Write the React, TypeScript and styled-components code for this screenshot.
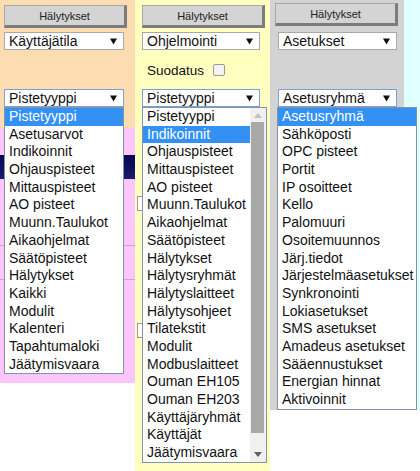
import * as React from 'react';
import styled, { createGlobalStyle } from 'styled-components';

const GlobalStyle = createGlobalStyle`
  html, body {
    margin: 0;
    padding: 0;
    background: #ffffff;
  }
  body {
    font-family: "Liberation Sans", Arial, sans-serif;
    color: #111;
  }
`;

const ROW = 17.7;

const Page = styled.div`
  display: flex;
  align-items: flex-start;
  width: 420px;
  height: 471px;
  overflow: hidden;
`;

const Column = styled.div<{ $bg: string; $w?: number; $h: number }>`
  position: relative;
  display: flex;
  flex-direction: column;
  width: ${p => (p.$w ? `${p.$w}px` : 'auto')};
  flex: ${p => (p.$w ? '0 0 auto' : '1 1 auto')};
  height: ${p => p.$h}px;
  background: ${p => p.$bg};
`;

const Controls = styled.div<{ $pad: string }>`
  display: flex;
  flex-direction: column;
  align-items: flex-start;
  padding: ${p => p.$pad};
`;

const AlarmButton = styled.div`
  box-sizing: border-box;
  width: 123px;
  height: 23px;
  display: flex;
  align-items: center;
  justify-content: center;
  background: #d4d4d4;
  border: 1px solid #a8a8a8;
  border-right: 3px solid #7c7c7c;
  border-bottom: 3px solid #7c7c7c;
  font-size: 11px;
  color: #222;
`;

const SelectWrap = styled.div<{ $top: number; $left?: number }>`
  position: relative;
  margin-top: ${p => p.$top}px;
  margin-left: ${p => p.$left ?? 0}px;
`;

const SelectBox = styled.div<{ $w: number; $focus?: boolean }>`
  box-sizing: border-box;
  width: ${p => p.$w}px;
  height: 18px;
  display: flex;
  align-items: center;
  justify-content: space-between;
  padding: 0 6px 0 4px;
  background: #fff;
  border: 1px solid ${p => (p.$focus ? '#7f9fd6' : '#a9a9a9')};
  font-size: 14px;
  line-height: 16px;
  color: #111;
`;

const DropList = styled.div<{ $w: number; $left: number }>`
  position: absolute;
  z-index: 10;
  top: 100%;
  left: ${p => p.$left}px;
  width: ${p => p.$w}px;
  box-sizing: border-box;
  display: flex;
  background: #fff;
  border: 1px solid #8593a6;
`;

const Options = styled.div`
  flex: 1 1 auto;
  display: flex;
  flex-direction: column;
`;

const Option = styled.div<{ $active?: boolean }>`
  height: ${ROW}px;
  line-height: ${ROW}px;
  padding-left: 4px;
  white-space: nowrap;
  font-size: 14px;
  color: ${p => (p.$active ? '#fff' : '#111')};
  background: ${p => (p.$active ? '#3391f4' : 'transparent')};
`;

const Scrollbar = styled.div`
  flex: 0 0 16px;
  display: flex;
  flex-direction: column;
  background: #f0f0f0;
`;

const ScrollArrow = styled.div<{ $h: number }>`
  height: ${p => p.$h}px;
  display: flex;
  align-items: center;
  justify-content: center;
`;

const Thumb = styled.div<{ $h: number }>`
  height: ${p => p.$h}px;
  margin: 0 2px 0 1px;
  background: #a8a8a8;
`;

const Track = styled.div`
  flex: 1 1 auto;
`;

const FilterRow = styled.label`
  display: flex;
  align-items: center;
  gap: 9px;
  margin: 12px 0 0 5px;
  height: 16px;
  font-size: 13.5px;
  color: #111;
`;

const CheckBox = styled.span`
  box-sizing: border-box;
  width: 12px;
  height: 12px;
  border: 1px solid #9a9a9a;
  background: #f3f3f3;
  border-radius: 2px;
`;

const PinkPanel = styled.div`
  margin-top: 21px;
  height: 255px;
  display: flex;
  flex-direction: column;
  background: #fcc6fc;
`;

const NavyBar = styled.div`
  margin-top: 27px;
  height: 24px;
  background: linear-gradient(#060650, #1a1a72);
`;

const PanelRow = styled.div<{ $h: number }>`
  height: ${p => p.$h}px;
  border-bottom: 1px solid #c8a8c8;
`;

const HiddenInput = styled.div<{ $top: number }>`
  margin: ${p => p.$top}px 0 0 2px;
  width: 60px;
  height: 13px;
  border: 1px solid #9a9a9a;
  border-right: none;
  background: #fff;
`;

const leftItems = [
  'Pistetyyppi', 'Asetusarvot', 'Indikoinnit', 'Ohjauspisteet', 'Mittauspisteet',
  'AO pisteet', 'Muunn.Taulukot', 'Aikaohjelmat', 'Säätöpisteet', 'Hälytykset',
  'Kaikki', 'Modulit', 'Kalenteri', 'Tapahtumaloki', 'Jäätymisvaara',
];

const midItems = [
  'Pistetyyppi', 'Indikoinnit', 'Ohjauspisteet', 'Mittauspisteet', 'AO pisteet',
  'Muunn.Taulukot', 'Aikaohjelmat', 'Säätöpisteet', 'Hälytykset', 'Hälytysryhmät',
  'Hälytyslaitteet', 'Hälytysohjeet', 'Tilatekstit', 'Modulit', 'Modbuslaitteet',
  'Ouman EH105', 'Ouman EH203', 'Käyttäjäryhmät', 'Käyttäjät', 'Jäätymisvaara',
];

const rightItems = [
  'Asetusryhmä', 'Sähköposti', 'OPC pisteet', 'Portit', 'IP osoitteet', 'Kello',
  'Palomuuri', 'Osoitemuunnos', 'Järj.tiedot', 'Järjestelmäasetukset', 'Synkronointi',
  'Lokiasetukset', 'SMS asetukset', 'Amadeus asetukset', 'Sääennustukset',
  'Energian hinnat', 'Aktivoinnit',
];

const OptionList = ({ items, active }: { items: string[]; active: number }) => (
  <Options>
    {items.map((it, i) => (
      <Option key={it + i} $active={i === active}>{it}</Option>
    ))}
  </Options>
);

const Caret = () => (
  <svg width="7" height="7" viewBox="0 0 7 7">
    <path d="M0 0.5 L7 0.5 L3.5 6.5 Z" fill="#111" />
  </svg>
);

const Select = ({ label, w, focus }: { label: string; w: number; focus?: boolean }) => (
  <SelectBox $w={w} $focus={focus}>
    <span>{label}</span>
    <Caret />
  </SelectBox>
);

const App = () => {
  return (
    <>
      <GlobalStyle />
      <Page>
        <Column $bg="#fddcb2" $w={135} $h={383}>
          <Controls $pad="5px 0 0 4px">
            <AlarmButton>Hälytykset</AlarmButton>
            <SelectWrap $top={4}>
              <Select label="Käyttäjätila" w={120} />
            </SelectWrap>
            <SelectWrap $top={39}>
              <Select label="Pistetyyppi" w={120} focus />
              <DropList $w={120} $left={0}>
                <OptionList items={leftItems} active={0} />
              </DropList>
            </SelectWrap>
          </Controls>
          <PinkPanel>
            <NavyBar />
            <PanelRow $h={66} />
            <PanelRow $h={33} />
          </PinkPanel>
        </Column>

        <Column $bg="#ffffc0" $w={135} $h={471}>
          <Controls $pad="5px 0 0 7px">
            <AlarmButton>Hälytykset</AlarmButton>
            <SelectWrap $top={4}>
              <Select label="Ohjelmointi" w={118} />
            </SelectWrap>
            <FilterRow>
              Suodatus
              <CheckBox />
            </FilterRow>
            <SelectWrap $top={11}>
              <Select label="Pistetyyppi" w={118} focus />
              <DropList $w={125} $left={0}>
                <OptionList items={midItems} active={1} />
                <Scrollbar>
                  <ScrollArrow $h={14}>
                    <svg width="8" height="5" viewBox="0 0 8 5">
                      <path d="M0 5 L4 0 L8 5 Z" fill="#c2c2c2" />
                    </svg>
                  </ScrollArrow>
                  <Thumb $h={311} />
                  <Track />
                  <ScrollArrow $h={14}>
                    <svg width="8" height="5" viewBox="0 0 8 5">
                      <path d="M0 0 L8 0 L4 5 Z" fill="#606060" />
                    </svg>
                  </ScrollArrow>
                </Scrollbar>
              </DropList>
            </SelectWrap>
          </Controls>
          <HiddenInput $top={89} />
          <HiddenInput $top={112} />
        </Column>

        <Column $bg="#d3d3d3" $w={134} $h={410}>
          <Controls $pad="3px 0 0 5px">
            <AlarmButton>Hälytykset</AlarmButton>
            <SelectWrap $top={6} $left={3}>
              <Select label="Asetukset" w={119} />
            </SelectWrap>
            <SelectWrap $top={39} $left={3}>
              <Select label="Asetusryhmä" w={119} focus />
              <DropList $w={140} $left={-1}>
                <OptionList items={rightItems} active={0} />
              </DropList>
            </SelectWrap>
          </Controls>
        </Column>

        <Column $bg="#e0ffff" $h={410} />
      </Page>
    </>
  );
};

export default App;
